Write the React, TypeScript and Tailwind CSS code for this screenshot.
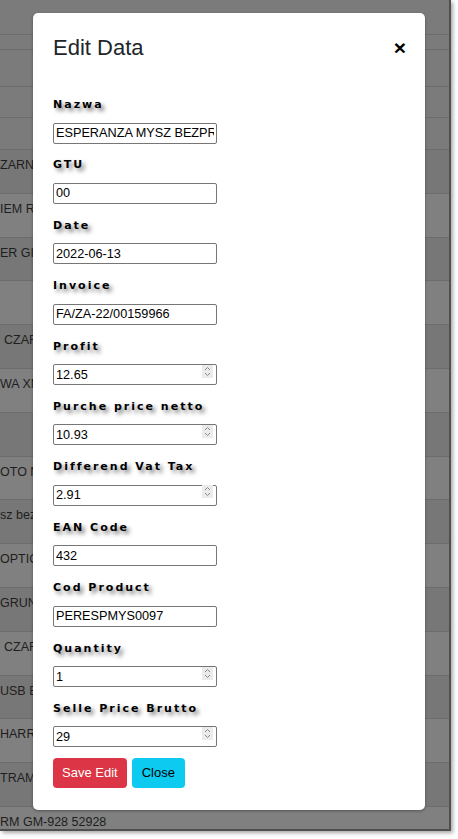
import { Fragment } from "react";

const topRows = ["h-[35px]", "h-[15px]", "h-[37px]", "h-[31px]", "h-[32px]"];

const tableRows = [
  { text: "ZARNO", dark: true, shift: "" },
  { text: "IEM R", dark: false, shift: "" },
  { text: "ER GI", dark: true, shift: "" },
  { text: "", dark: false, shift: "" },
  { text: "CZAR", dark: true, shift: "pl-[4px]" },
  { text: "WA XM", dark: false, shift: "" },
  { text: "", dark: true, shift: "" },
  { text: "OTO M", dark: false, shift: "" },
  { text: "sz bez", dark: true, shift: "" },
  { text: "OPTIC", dark: false, shift: "" },
  { text: "GRUN", dark: true, shift: "" },
  { text: "CZAR", dark: false, shift: "pl-[4px]" },
  { text: "USB B", dark: true, shift: "" },
  { text: "HARRI", dark: false, shift: "" },
  { text: "TRAMY", dark: true, shift: "" },
  { text: "RM GM-928 52928", dark: false, shift: "" },
];

const fields = [
  { label: "Nazwa", value: "ESPERANZA MYSZ BEZPRZEWODOWA OPTYCZNA", spin: false },
  { label: "GTU", value: "00", spin: false },
  { label: "Date", value: "2022-06-13", spin: false },
  { label: "Invoice", value: "FA/ZA-22/00159966", spin: false },
  { label: "Profit", value: "12.65", spin: true },
  { label: "Purche price netto", value: "10.93", spin: true },
  { label: "Differend Vat Tax", value: "2.91", spin: true },
  { label: "EAN Code", value: "432", spin: false },
  { label: "Cod Product", value: "PERESPMYS0097", spin: false },
  { label: "Quantity", value: "1", spin: true },
  { label: "Selle Price Brutto", value: "29", spin: true },
];

function Spinner() {
  return (
    <span className="pointer-events-none absolute right-[4px] top-[4px] flex h-[13px] w-[11px] items-center justify-center bg-[#ebebeb]">
      <svg width="9" height="11" viewBox="0 0 9 11" fill="none" stroke="#8a8a8a" strokeWidth="1">
        <path d="M2 4 L4.5 1.5 L7 4" />
        <path d="M2 7 L4.5 9.5 L7 7" />
      </svg>
    </span>
  );
}

function Field({ label, value, spin }: { label: string; value: string; spin: boolean }) {
  return (
    <div className="flex flex-col">
      <label className="mb-[6px] block font-['DejaVu_Sans',sans-serif] text-[11px] leading-[17px] font-bold tracking-[2px] text-black [text-shadow:3px_3px_4px_#777]">
        {label}
      </label>
      <div className="relative h-[21px] w-[164px]">
        <input
          type="text"
          defaultValue={value}
          className={
            spin
              ? "h-full w-full rounded-[2px] border border-[#767676] bg-white pl-[2px] pr-[18px] font-['Liberation_Sans',Arial,sans-serif] text-[12.7px] text-black outline-none"
              : "h-full w-full rounded-[2px] border border-[#767676] bg-white px-[2px] font-['Liberation_Sans',Arial,sans-serif] text-[12.7px] text-black outline-none"
          }
        />
        {spin && <Spinner />}
      </div>
    </div>
  );
}

export default function App() {
  return (
    <div className="h-[839px] w-[458px] bg-white">
      <div className="relative h-[831px] w-[451px] overflow-hidden border-r-2 border-b-2 border-[#4f4f4f] bg-[#7b7b7b] shadow-[2px_2px_4px_rgba(0,0,0,0.35)]">
        {/* table behind the backdrop */}
        <div className="flex flex-col font-['Liberation_Sans',Arial,sans-serif] text-[12.5px] text-[#1e1e1e]">
          {topRows.map((h, i) => (
            <div key={i} className={`${h} border-b border-[#6c6c6c]`} />
          ))}
          {tableRows.map((r, i) => (
            <Fragment key={i}>
              <div
                className={
                  r.dark
                    ? "h-[43.8px] shrink-0 border-b border-[#6c6c6c] bg-[#777777] pt-[5px] leading-5 whitespace-nowrap"
                    : "h-[43.8px] shrink-0 border-b border-[#6c6c6c] bg-[#808080] pt-[5px] leading-5 whitespace-nowrap"
                }
              >
                <div className={r.shift}>{r.text}</div>
              </div>
            </Fragment>
          ))}
        </div>

        {/* modal */}
        <div className="absolute left-[33px] top-[13px] flex h-[797px] w-[392px] flex-col rounded-[5px] bg-white px-5 pt-[18px] shadow-[0_1px_3px_rgba(0,0,0,0.35)]">
          <div className="flex items-center justify-between">
            <h5 className="font-['Liberation_Sans',Arial,sans-serif] text-[22px] leading-[33px] text-[#212529]">Edit Data</h5>
            <button className="mr-[-1px] font-['Liberation_Sans',Arial,sans-serif] text-[21px] leading-none font-bold text-black">×</button>
          </div>

          <div className="mt-[32px] flex flex-col gap-[16.4px]">
            {fields.map((f) => (
              <Field key={f.label} label={f.label} value={f.value} spin={f.spin} />
            ))}
          </div>

          <div className="mt-[14px] flex gap-[5px] font-['Liberation_Sans',Arial,sans-serif] text-[13px]">
            <button className="h-[30px] rounded-[4px] bg-[#dc3545] px-[9px] text-white">Save Edit</button>
            <button className="h-[30px] rounded-[4px] bg-[#0dcaf0] px-[10px] text-black">Close</button>
          </div>
        </div>
      </div>
    </div>
  );
}
